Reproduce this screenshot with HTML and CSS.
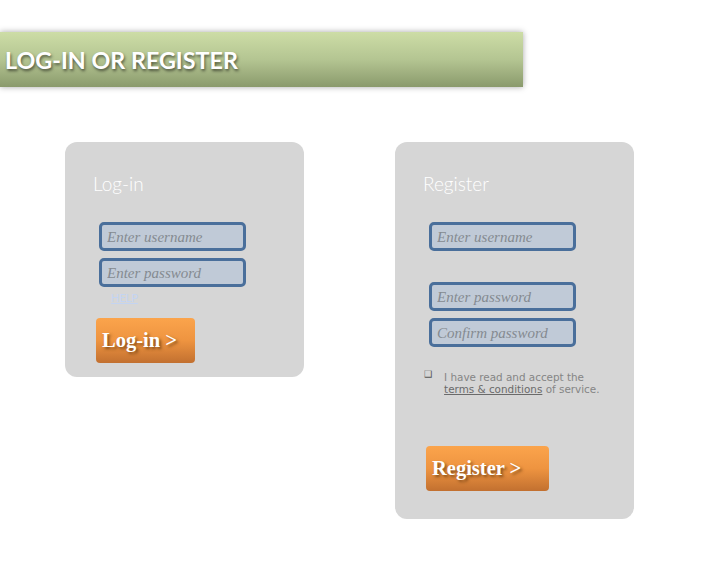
FILE: index.html
```html
<!DOCTYPE html>
<html>
<head>
<meta charset="utf-8">
<link rel="stylesheet" href="styles.css">
</head>
<body>
<div class="banner"><h1>LOG-IN OR REGISTER</h1></div>
<div class="cards">
  <div class="card login">
    <h2>Log-in</h2>
    <div class="fields">
      <input class="field" type="text" placeholder="Enter username">
      <input class="field" type="password" placeholder="Enter password">
    </div>
    <a class="help" href="#">HELP</a>
    <button class="btn btn-login">Log-in &gt;</button>
  </div>
  <div class="card register">
    <h2>Register</h2>
    <div class="fields">
      <input class="field" type="text" placeholder="Enter username">
      <input class="field gap" type="password" placeholder="Enter password">
      <input class="field" type="password" placeholder="Confirm password">
    </div>
    <div class="terms">
      <span class="box">❑</span>
      <p>I have read and accept the<br><a href="#">terms &amp; conditions</a> of service.</p>
    </div>
    <button class="btn btn-register">Register &gt;</button>
  </div>
</div>
</body>
</html>
```
FILE: styles.css
```css
html, body { margin: 0; padding: 0; background: #fff; }
body { width: 717px; height: 574px; overflow: hidden; }

.banner {
  margin-top: 32px;
  width: 523px;
  height: 55px;
  background: linear-gradient(to bottom, #cddda6 0%, #b4c592 50%, #8a9a6c 100%);
  box-shadow: 0 0 6px rgba(0,0,0,0.35);
  display: flex;
  align-items: center;
}
.banner h1 {
  margin: 0 0 0 5px;
  font-family: "Lato", "Open Sans", sans-serif;
  font-weight: 700;
  font-size: 23.3px;
  color: #fff;
  text-shadow: 1px 2px 3px rgba(0,0,0,0.55);
}

.cards {
  display: flex;
  align-items: flex-start;
  gap: 91px;
  margin-top: 55px;
  padding-left: 65px;
}
.card {
  width: 239px;
  background: #d6d6d6;
  border-radius: 12px;
  box-sizing: border-box;
  padding: 30px 0 0 28px;
  display: flex;
  flex-direction: column;
  align-items: flex-start;
}
.login { height: 235px; }
.register { height: 377px; }

.card h2 {
  margin: 0;
  font-family: "Lato", sans-serif;
  font-weight: 300;
  font-size: 19px;
  line-height: 23px;
  color: #fff;
}
.fields {
  display: flex;
  flex-direction: column;
  gap: 7px;
  margin: 27px 0 0 6px;
}
.field {
  box-sizing: border-box;
  width: 147px;
  height: 29px;
  border: 3px solid #4a6f9b;
  border-radius: 5px;
  background: #c0cad7;
  padding: 1px 5px 0;
  font-family: "Liberation Serif", serif;
  font-style: italic;
  font-size: 15px;
  outline: none;
}
.field::placeholder { color: #858a91; }
.field.gap { margin-top: 24px; }

.help {
  margin: 4px 0 0 18px;
  font-family: "Lato", sans-serif;
  font-size: 11px;
  line-height: 13px;
  color: #c3d4f2;
  text-decoration: underline;
}

.btn {
  border: none;
  border-radius: 4px;
  height: 45px;
  background: linear-gradient(to bottom, #fba44c 0%, #ee9440 50%, #c27030 100%);
  color: #fff;
  font-family: "Liberation Serif", serif;
  font-weight: 700;
  font-size: 20.5px;
  text-align: left;
  padding: 0 0 0 6px;
  text-shadow: 2px 2px 3px rgba(90,50,10,0.7);
  cursor: pointer;
}
.btn-login { width: 99px; margin: 14px 0 0 3px; }
.btn-register { width: 123px; margin: 51px 0 0 3px; }

.terms {
  display: flex;
  gap: 12px;
  margin: 24px 0 0 1px;
  font-family: "DejaVu Sans", sans-serif;
  font-size: 10.4px;
  line-height: 12px;
  color: #858585;
}
.terms .box { font-size: 9px; color: #555; line-height: 12px; margin-top: -3px; }
.terms p { margin: 0; }
.terms a { color: #6a6a6a; text-decoration: underline; }
```
